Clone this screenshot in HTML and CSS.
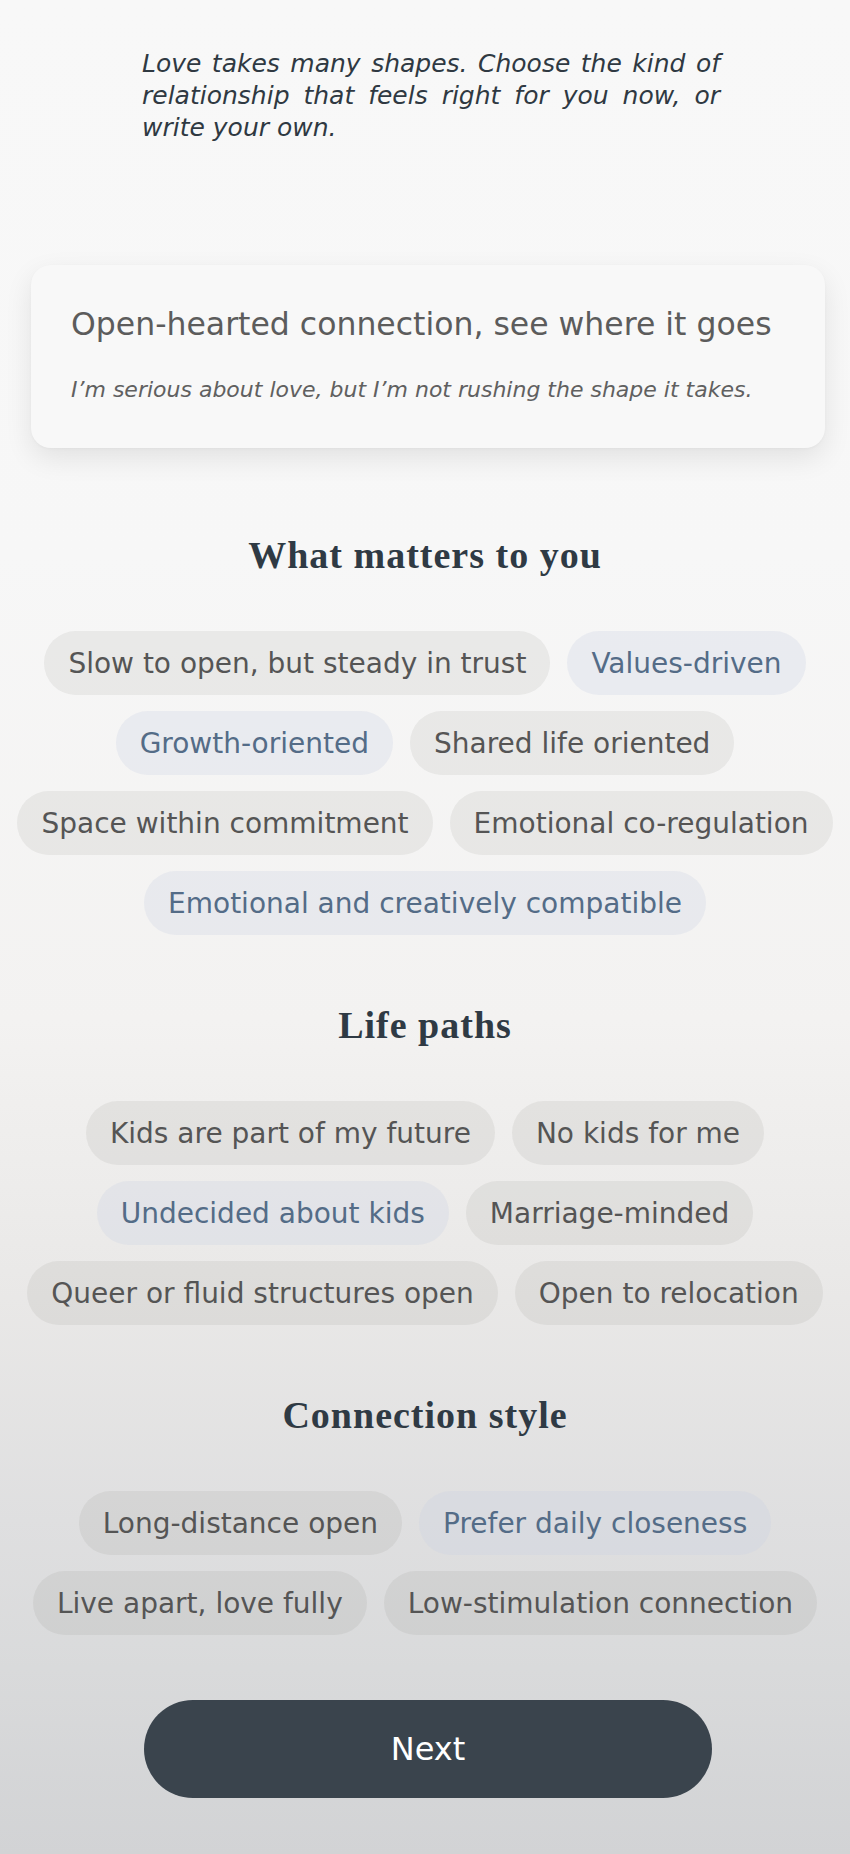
FILE: index.html
```html
<!DOCTYPE html>
<html lang="en">
<head>
<meta charset="utf-8">
<title>Relationship shape</title>
<link rel="stylesheet" href="styles.css">
</head>
<body>
<main class="page">
  <p class="intro">Love takes many shapes. Choose the kind of relationship that feels right for you now, or write your own.</p>

  <section class="card">
    <h2 class="card-title">Open-hearted connection, see where it goes</h2>
    <p class="card-sub">I’m serious about love, but I’m not rushing the shape it takes.</p>
  </section>

  <section class="group group-first">
    <h3 class="group-title">What matters to you</h3>
    <div class="chips">
      <span class="chip">Slow to open, but steady in trust</span>
      <span class="chip chip-on">Values-driven</span>
      <span class="chip chip-on">Growth-oriented</span>
      <span class="chip">Shared life oriented</span>
      <span class="chip">Space within commitment</span>
      <span class="chip">Emotional co-regulation</span>
      <span class="chip chip-on">Emotional and creatively compatible</span>
    </div>
  </section>

  <section class="group">
    <h3 class="group-title">Life paths</h3>
    <div class="chips">
      <span class="chip">Kids are part of my future</span>
      <span class="chip">No kids for me</span>
      <span class="chip chip-on">Undecided about kids</span>
      <span class="chip">Marriage-minded</span>
      <span class="chip">Queer or fluid structures open</span>
      <span class="chip">Open to relocation</span>
    </div>
  </section>

  <section class="group">
    <h3 class="group-title">Connection style</h3>
    <div class="chips">
      <span class="chip">Long-distance open</span>
      <span class="chip chip-on">Prefer daily closeness</span>
      <span class="chip">Live apart, love fully</span>
      <span class="chip">Low-stimulation connection</span>
    </div>
  </section>

  <div class="actions">
    <button class="next" type="button">Next</button>
  </div>
</main>
</body>
</html>
```

FILE: styles.css
```css
* { box-sizing: border-box; }

html, body {
  margin: 0;
  padding: 0;
}

body {
  min-height: 1854px;
  background: linear-gradient(180deg, #f8f8f8 0%, #f7f7f7 30%, #f3f2f1 55%, #e9e8e7 70%, #dfdfe0 82%, #d9dadb 90%, #d2d3d5 100%);
  font-family: "DejaVu Sans", "Liberation Sans", sans-serif;
  color: #555555;
}

.page {
  width: 850px;
  padding: 48px 0 56px;
  display: flex;
  flex-direction: column;
}

.intro {
  margin: 0 0 0 142px;
  width: 578px;
  font-style: oblique;
  font-size: 25px;
  line-height: 32px;
  color: #2f3942;
  text-align: justify;
}

.card {
  margin: 121px 25px 0 31px;
  padding: 39px 40px 44px;
  background: #f8f8f8;
  border-radius: 20px;
  box-shadow: 0 10px 28px rgba(0, 0, 0, 0.09), 0 1px 3px rgba(0, 0, 0, 0.03);
}

.card-title {
  margin: 0;
  font-size: 31.5px;
  line-height: 40px;
  font-weight: 400;
  color: #5c5c5c;
  white-space: nowrap;
}

.card-sub {
  margin: 32px 0 0;
  font-size: 22px;
  line-height: 28px;
  font-style: oblique;
  color: #606060;
  white-space: nowrap;
}

.group {
  margin-top: 67px;
  display: flex;
  flex-direction: column;
  align-items: center;
}

.group-first {
  margin-top: 84px;
}

.group-title {
  margin: 0;
  font-family: "Liberation Serif", serif;
  font-weight: 700;
  font-size: 38px;
  line-height: 46px;
  letter-spacing: 1px;
  color: #2f3a44;
}

.chips {
  margin-top: 53px;
  padding: 0 8px;
  display: flex;
  flex-wrap: wrap;
  justify-content: center;
  gap: 16px 17px;
}

.chip {
  height: 64px;
  padding: 0 24px;
  display: inline-flex;
  align-items: center;
  border-radius: 32px;
  background: rgba(120, 115, 110, 0.1);
  color: #555555;
  font-size: 28px;
  white-space: nowrap;
}

.chip-on {
  background: rgba(200, 210, 225, 0.28);
  color: #546c87;
}

.actions {
  margin-top: 65px;
  padding-left: 6px;
  display: flex;
  justify-content: center;
}

.next {
  width: 568px;
  height: 98px;
  border: 0;
  border-radius: 49px;
  background: #3a444d;
  color: #ffffff;
  font-family: "DejaVu Sans", "Liberation Sans", sans-serif;
  font-size: 32px;
  font-weight: 400;
  cursor: pointer;
}
```
